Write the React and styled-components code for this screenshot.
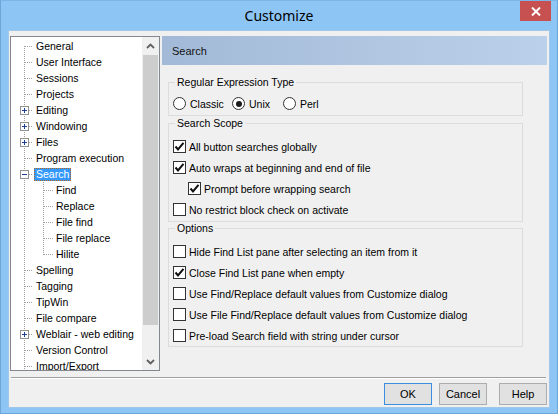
import React from 'react';
import styled, { createGlobalStyle } from 'styled-components';

const Global = createGlobalStyle`
  html, body { margin: 0; padding: 0; background: #8dc5f5; }
  body { font-family: "Liberation Sans", Arial, sans-serif; }
  * { box-sizing: border-box; }
`;

const Window = styled.div`
  width: 558px;
  height: 414px;
  background: #8dc5f5;
  border: 1px solid #6ea6da;
  border-top-color: #7db3e6;
  display: flex;
  flex-direction: column;
  padding: 0 7px 5px 7px;
`;

const TitleBar = styled.div`
  height: 29px;
  margin: 0 -7px;
  display: grid;
  grid-template-columns: 1fr auto 1fr;
  align-items: start;
`;

const Title = styled.div`
  grid-column: 2;
  align-self: center;
  font-family: "Noto Sans", "Open Sans", sans-serif;
  font-size: 14px;
  color: #000;
  line-height: 18px;
  padding-top: 1px;
`;

const CloseButton = styled.div`
  grid-column: 3;
  justify-self: end;
  width: 31px;
  height: 20px;
  margin-right: 6px;
  background: #c75050;
  display: flex;
  align-items: center;
  justify-content: center;
`;

const Client = styled.div`
  flex: 1;
  background: #f0f0f0;
  border: 1px solid #a2c6e8;
  display: flex;
  flex-direction: column;
  padding: 5px 1px 2px 1px;
`;

const Main = styled.div`
  display: flex;
  gap: 2px;
  height: 335px;
`;

const Tree = styled.div`
  width: 150px;
  border: 1px solid #828790;
  background: #fff;
  display: flex;
`;

const TreeList = styled.div`
  flex: 1;
  overflow: hidden;
  padding-top: 1px;
  font-size: 10.5px;
  color: #000;
`;

const TreeRow = styled.div`
  height: 16px;
  display: flex;
  align-items: center;
  white-space: nowrap;
`;

const TreeLabel = styled.span`
  height: 13px;
  line-height: 13px;
  padding: 0 2px;
  background: ${p => (p.$selected ? '#3399ff' : 'transparent')};
  color: ${p => (p.$selected ? '#fff' : '#000')};
  outline: ${p => (p.$selected ? '1px dotted #b8661c' : 'none')};
  outline-offset: -1px;
`;

const ScrollBar = styled.div`
  width: 17px;
  background: #f0f0f0;
  display: flex;
  flex-direction: column;
`;

const ScrollArrow = styled.div`
  height: 17px;
  display: flex;
  align-items: center;
  justify-content: center;
`;

const ScrollTrack = styled.div`
  flex: 1;
  display: flex;
  flex-direction: column;
`;

const ScrollThumb = styled.div`
  height: 270px;
  margin: 1px 1px 0 1px;
  background: #cdcdcd;
`;

const Panel = styled.div`
  flex: 1;
  display: flex;
  flex-direction: column;
`;

const PanelHeader = styled.div`
  height: 29px;
  background: linear-gradient(to right, #a2bad7, #bbd0ea);
  display: flex;
  align-items: center;
  padding-left: 10px;
  font-size: 11px;
  color: #111;
  margin-right: 1px;
`;

const Group = styled.fieldset`
  margin: ${p => p.$mt}px 0 0 6px;
  width: 355px;
  min-inline-size: auto;
  border: 1px solid #dcdcdc;
  padding: ${p => p.$pt}px 4px ${p => p.$pb}px 4px;
`;

const Legend = styled.legend`
  padding: 0 2px;
  margin-left: 2px;
  font-size: 10.5px;
  line-height: 13px;
  color: #000;
`;

const OptionRow = styled.div`
  height: 21px;
  display: flex;
  align-items: center;
  padding-left: ${p => p.$indent || 0}px;
  font-size: 10.5px;
  color: #000;
  white-space: nowrap;
`;

const RadioOption = styled.div`
  width: ${p => p.$w}px;
  display: flex;
  align-items: center;
`;

const RadioCircle = styled.span`
  width: 13px;
  height: 13px;
  border: 1px solid #333;
  border-radius: 50%;
  background: #fff;
  display: flex;
  align-items: center;
  justify-content: center;
  margin-right: 4px;
  flex: none;
`;

const RadioDot = styled.span`
  width: 6px;
  height: 6px;
  border-radius: 50%;
  background: #1a1a1a;
`;

const CheckBox = styled.span`
  width: 13px;
  height: 13px;
  border: 1px solid #333;
  background: #fff;
  margin-right: 3px;
  flex: none;
  display: flex;
  align-items: center;
  justify-content: center;
`;

const Separator = styled.div`
  margin: 6px 2px 0 1px;
  height: 2px;
  border-top: 1px solid #a0a0a0;
  border-bottom: 1px solid #fff;
`;

const ButtonRow = styled.div`
  display: flex;
  justify-content: flex-end;
  gap: 7px;
  margin-top: 4px;
  padding-right: 1px;
`;

const Button = styled.div`
  width: 48px;
  height: 22px;
  border: 1px solid ${p => (p.$default ? '#3c8fde' : '#adadad')};
  background: #e1e1e1;
  display: flex;
  align-items: center;
  justify-content: center;
  font-size: 11px;
  color: #000;
  margin-left: ${p => (p.$spaced ? 5 : 0)}px;
`;

const DOT = '#a0a0a0';

function Connector({ level, expander, first, lastChild }) {
  const w = level === 0 ? 23 : 43;
  return (
    <svg width={w} height="16" style={{ flex: 'none', display: 'block' }} shapeRendering="crispEdges">
      <line x1="13.5" y1={first ? 8 : 0} x2="13.5" y2="16" stroke={DOT} strokeDasharray="1 1" />
      {level === 0 && (
        <line x1="14" y1="8.5" x2="22" y2="8.5" stroke={DOT} strokeDasharray="1 1" />
      )}
      {level === 1 && (
        <>
          <line x1="32.5" y1="0" x2="32.5" y2={lastChild ? 9 : 16} stroke={DOT} strokeDasharray="1 1" />
          <line x1="33" y1="8.5" x2="42" y2="8.5" stroke={DOT} strokeDasharray="1 1" />
        </>
      )}
      {expander && (
        <>
          <rect x="9.5" y="4.5" width="8" height="8" fill="#fff" stroke="#919191" />
          <line x1="11" y1="8.5" x2="16" y2="8.5" stroke="#1e3f9a" />
          {expander === 'plus' && <line x1="13.5" y1="6" x2="13.5" y2="11" stroke="#1e3f9a" />}
        </>
      )}
    </svg>
  );
}

const treeItems = [
  { label: 'General', first: true },
  { label: 'User Interface' },
  { label: 'Sessions' },
  { label: 'Projects' },
  { label: 'Editing', expander: 'plus' },
  { label: 'Windowing', expander: 'plus' },
  { label: 'Files', expander: 'plus' },
  { label: 'Program execution' },
  { label: 'Search', expander: 'minus', selected: true },
  { label: 'Find', level: 1 },
  { label: 'Replace', level: 1 },
  { label: 'File find', level: 1 },
  { label: 'File replace', level: 1 },
  { label: 'Hilite', level: 1, lastChild: true },
  { label: 'Spelling' },
  { label: 'Tagging' },
  { label: 'TipWin' },
  { label: 'File compare' },
  { label: 'Weblair - web editing', expander: 'plus' },
  { label: 'Version Control' },
  { label: 'Import/Export' },
];

function Check({ checked }) {
  return (
    <CheckBox>
      {checked && (
        <svg width="11" height="11" viewBox="0 0 11 11">
          <polyline points="1.5,5.5 4,8.5 9.5,1.8" fill="none" stroke="#111" strokeWidth="2" />
        </svg>
      )}
    </CheckBox>
  );
}

function CheckRow({ checked, indent, children }) {
  return (
    <OptionRow $indent={indent}>
      <Check checked={checked} />
      {children}
    </OptionRow>
  );
}

function Radio({ checked, w, children }) {
  return (
    <RadioOption $w={w}>
      <RadioCircle>{checked && <RadioDot />}</RadioCircle>
      {children}
    </RadioOption>
  );
}

function Chevron({ down }) {
  return (
    <svg width="9" height="6" viewBox="0 0 9 6">
      <polyline
        points={down ? '1,1 4.5,4.5 8,1' : '1,5 4.5,1.5 8,5'}
        fill="none"
        stroke="#606060"
        strokeWidth="1.8"
      />
    </svg>
  );
}

export default function App() {
  return (
    <>
      <Global />
      <Window>
        <TitleBar>
          <Title>Customize</Title>
          <CloseButton>
            <svg width="10" height="9" viewBox="0 0 10 9">
              <path d="M1 0.5 L9 8.5 M9 0.5 L1 8.5" stroke="#fff" strokeWidth="2" />
            </svg>
          </CloseButton>
        </TitleBar>
        <Client>
          <Main>
            <Tree>
              <TreeList>
                {treeItems.map(it => (
                  <TreeRow key={it.label}>
                    <Connector
                      level={it.level || 0}
                      expander={it.expander}
                      first={it.first}
                      lastChild={it.lastChild}
                    />
                    <TreeLabel $selected={it.selected}>{it.label}</TreeLabel>
                  </TreeRow>
                ))}
              </TreeList>
              <ScrollBar>
                <ScrollArrow><Chevron /></ScrollArrow>
                <ScrollTrack><ScrollThumb /></ScrollTrack>
                <ScrollArrow><Chevron down /></ScrollArrow>
              </ScrollBar>
            </Tree>
            <Panel>
              <PanelHeader>Search</PanelHeader>
              <Group $mt={11} $pt={4} $pb={1}>
                <Legend>Regular Expression Type</Legend>
                <OptionRow>
                  <Radio w={59}>Classic</Radio>
                  <Radio w={51} checked>Unix</Radio>
                  <Radio w={40}>Perl</Radio>
                </OptionRow>
              </Group>
              <Group $mt={1} $pt={6} $pb={1}>
                <Legend>Search Scope</Legend>
                <CheckRow checked>All button searches globally</CheckRow>
                <CheckRow checked>Auto wraps at beginning and end of file</CheckRow>
                <CheckRow checked indent={15}>Prompt before wrapping search</CheckRow>
                <CheckRow>No restrict block check on activate</CheckRow>
              </Group>
              <Group $mt={0} $pt={6} $pb={0}>
                <Legend>Options</Legend>
                <CheckRow>Hide Find List pane after selecting an item from it</CheckRow>
                <CheckRow checked>Close Find List pane when empty</CheckRow>
                <CheckRow>Use Find/Replace default values from Customize dialog</CheckRow>
                <CheckRow>Use File Find/Replace default values from Customize dialog</CheckRow>
                <CheckRow>Pre-load Search field with string under cursor</CheckRow>
              </Group>
            </Panel>
          </Main>
          <Separator />
          <ButtonRow>
            <Button $default>OK</Button>
            <Button>Cancel</Button>
            <Button $spaced>Help</Button>
          </ButtonRow>
        </Client>
      </Window>
    </>
  );
}
